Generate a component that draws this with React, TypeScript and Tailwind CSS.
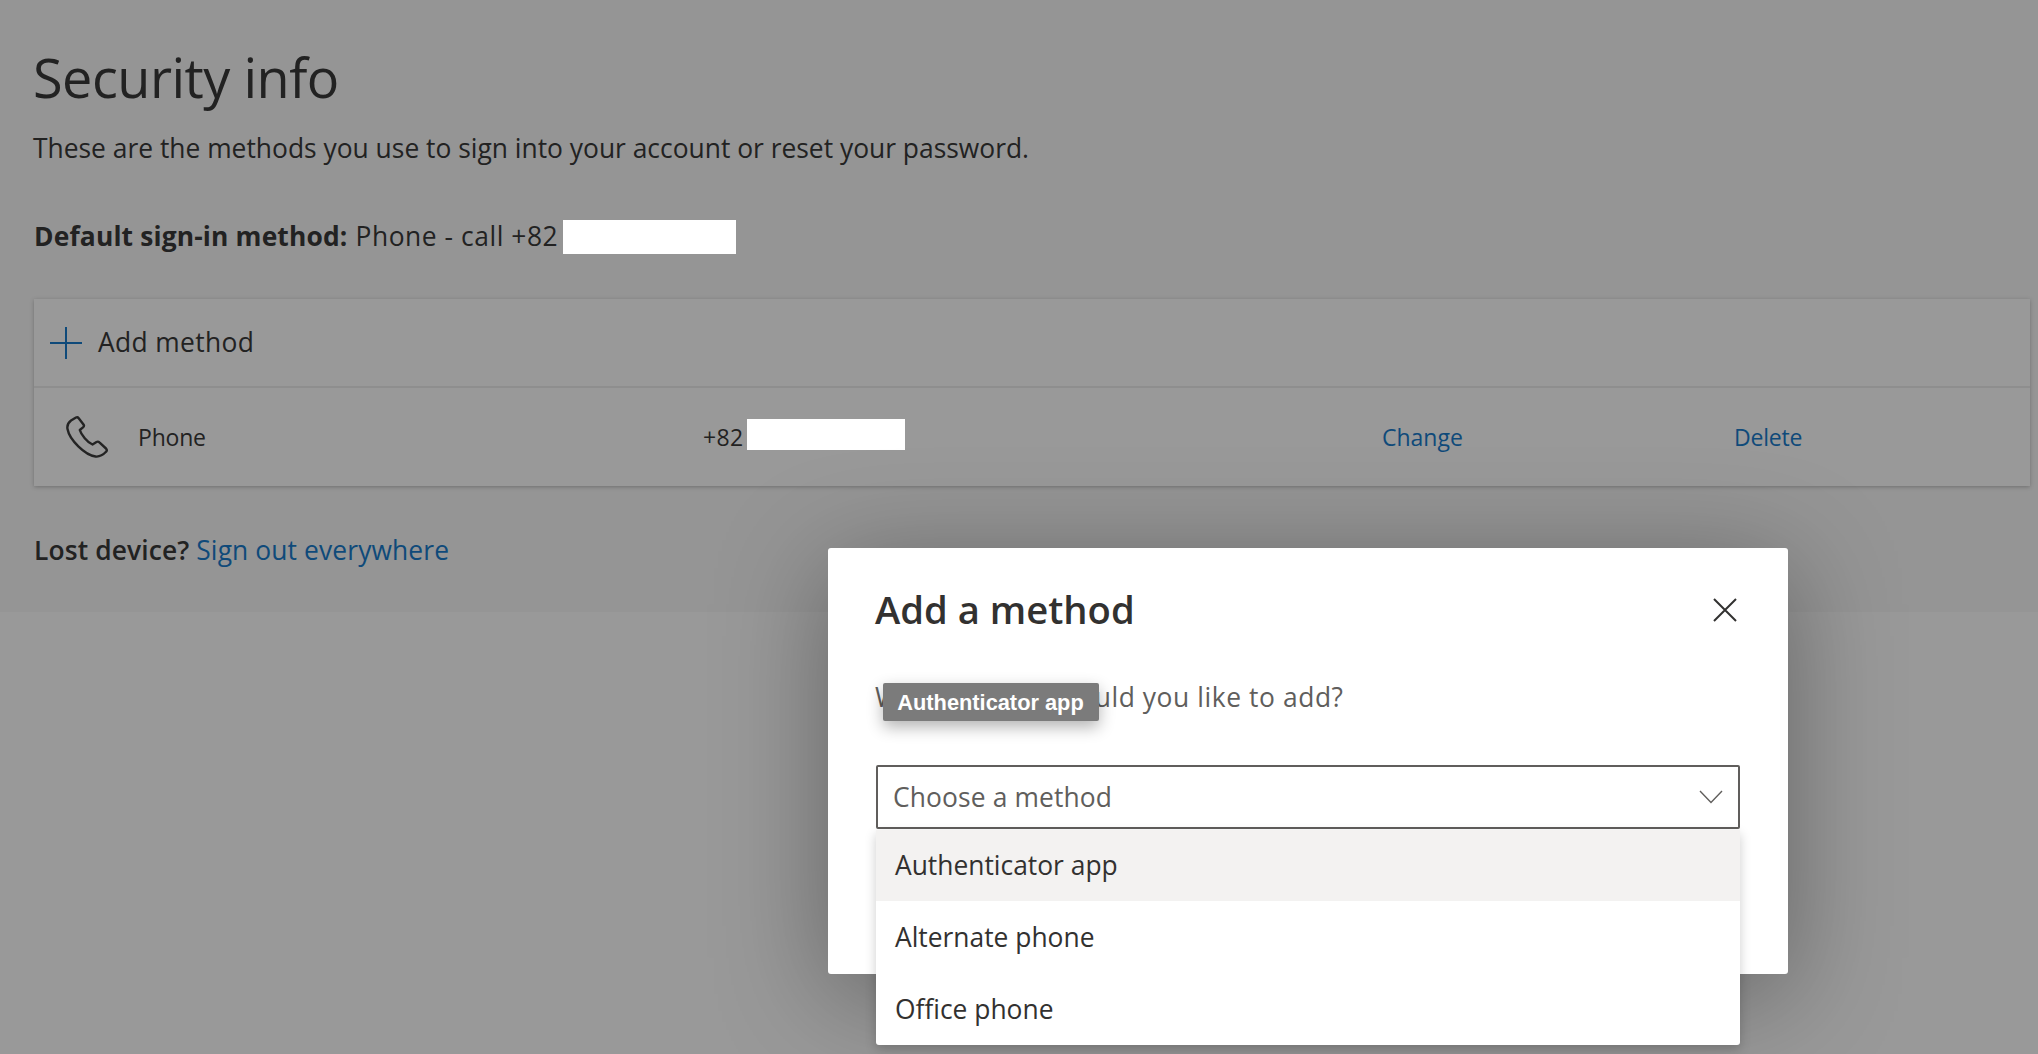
const font = "font-['Open_Sans','Noto_Sans',sans-serif]";

function PhoneIcon() {
  return (
    <svg width="44" height="44" viewBox="0 0 44 44" fill="none" stroke="#242424" strokeWidth="2.4" strokeLinejoin="round">
      <path d="M6 5.5 L11 2.5 C12 2 13 2.3 13.7 3.2 L18.5 9.5 C19.2 10.5 19 11.6 18 12.4 L14.8 15 C16 19.5 22.5 27.5 27.5 29.5 L31.5 27 C32.5 26.4 33.6 26.6 34.4 27.4 L41 33.5 C42 34.6 42 35.8 41 36.8 C38 40 34.5 42 30.5 41.5 C20 40 4.5 25 2.5 14 C1.9 10.5 3.2 7.6 6 5.5 Z" />
    </svg>
  );
}

export default function App() {
  return (
    <div className={`${font} relative h-[1054px] w-[2038px] overflow-hidden bg-[#999999]`}>
      <main className="h-[612px] bg-[#959595] pl-[33px] pt-[40px] text-[#222222]">
        <h1 className="text-[54px] font-normal leading-[75px] tracking-[-0.5px]">Security info</h1>
        <p className="mt-[15px] text-[26.4px] leading-[36px]">
          These are the methods you use to sign into your account or reset your password.
        </p>
        <div className="mt-[53px] flex h-[36px] items-center pl-[1px] text-[26.4px]">
          <b className="font-bold tracking-[0.15px]">Default sign-in method:</b>
          <span className="ml-[8px] tracking-[0.55px]">Phone - call +82</span>
          <span className="ml-[5px] h-[34px] w-[173px] bg-white" />
        </div>
        <section className="ml-[1px] mt-[44px] w-[1996px] bg-[#999999] shadow-[0_1px_4px_rgba(0,0,0,0.25)]">
          <div className="flex h-[89px] items-center border-b-2 border-[#8e8e8e] pl-[15px] text-[26.4px] tracking-[0.35px]">
            <svg width="34" height="34" viewBox="0 0 34 34" stroke="#0f4a7a" strokeWidth="2" fill="none">
              <path d="M17 1V33M1 17H33" />
            </svg>
            <span className="ml-[15px]">Add method</span>
          </div>
          <div className="grid h-[98px] grid-cols-[669px_679px_352px_1fr] items-center text-[23px]">
            <div className="flex items-center pl-[31px]">
              <PhoneIcon />
              <span className="ml-[29px] tracking-[-0.2px]">Phone</span>
            </div>
            <div className="flex items-center">
              <span className="tracking-[0.4px]">+82</span>
              <span className="ml-[3px] h-[31px] w-[158px] -translate-y-[3px] bg-white" />
            </div>
            <a className="text-[#0f4a7a]">Change</a>
            <a className="tracking-[-0.2px] text-[#0f4a7a]">Delete</a>
          </div>
        </section>
        <p className="ml-[1px] mt-[45px] text-[26.4px] tracking-[0.11px]">
          <b className="font-semibold">Lost device?</b>{' '}
          <a className="text-[#0f4a7a]">Sign out everywhere</a>
        </p>
      </main>

      {/* modal */}
      <div className="absolute left-[828px] top-[548px] h-[426px] w-[960px] rounded-[3px] bg-white pl-[47px] pr-[48px] pt-[34px] shadow-[0_20px_110px_rgba(0,0,0,0.35)]">
        <div className="flex h-[54px] items-center justify-between">
          <h2 className="text-[38.2px] font-semibold leading-[54px] text-[#323130]">Add a method</h2>
          <svg width="24" height="24" viewBox="0 0 24 24" stroke="#323130" strokeWidth="2" fill="none" className="mr-[3px] mt-[2px]">
            <path d="M1 1L23 23M23 1L1 23" />
          </svg>
        </div>
        <p className="mt-[43px] text-[26.4px] leading-[36px] tracking-[0.58px] text-[#605e5c]">What method would you like to add?</p>
        <div className="ml-[1px] mt-[50px] flex h-[64px] w-[864px] items-center justify-between rounded-[2px] border-2 border-[#605e5c] pl-[15px] pr-[15px] text-[26.4px] tracking-[0.12px] text-[#605e5c]">
          <span className="translate-y-[1px]">Choose a method</span>
          <svg width="24" height="14" viewBox="0 0 24 14" stroke="#605e5c" strokeWidth="1.4" fill="none">
            <path d="M1 1L12 12.5L23 1" />
          </svg>
        </div>
      </div>

      {/* tooltip */}
      <div className="absolute left-[883px] top-[683px] flex h-[38px] w-[216px] items-center justify-center rounded-[2px] bg-[#7b7b7b] pr-[1px] pt-[2px] font-['Liberation_Sans',sans-serif] text-[21.8px] font-semibold text-white shadow-[0_6px_16px_rgba(0,0,0,0.3)]">
        Authenticator app
      </div>

      {/* dropdown */}
      <ul className="absolute left-[876px] top-[830px] w-[864px] overflow-hidden rounded-b-[3px] bg-white text-[26.4px] text-[#323130] shadow-[0_4px_12px_rgba(0,0,0,0.2)]">
        <li className="flex h-[71px] items-center bg-[#f3f2f1] pl-[19px]">Authenticator app</li>
        <li className="flex h-[72px] items-center pl-[19px] pt-[2px]">Alternate phone</li>
        <li className="flex h-[72px] items-center pl-[19px] pt-[2px]">Office phone</li>
      </ul>
    </div>
  );
}
